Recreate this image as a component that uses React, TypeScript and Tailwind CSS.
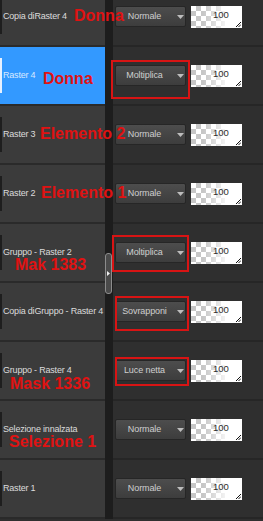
import React from "react";

type Layer = {
  name: string;
  mode: string;
  active?: boolean;
  note?: { text: string; left: number; top: number };
  box?: { left: number; top: number; w: number; h: number };
};

const layers: Layer[] = [
  { name: "Copia diRaster 4", mode: "Normale", note: { text: "Donna", left: 74, top: 20 } },
  {
    name: "Raster 4",
    mode: "Moltiplica",
    active: true,
    note: { text: "Donna", left: 43, top: 24 },
    box: { left: 111, top: 13, w: 79, h: 39 },
  },
  { name: "Raster 3", mode: "Normale", note: { text: "Elemento 2", left: 40, top: 20 } },
  { name: "Raster 2", mode: "Normale", note: { text: "Elemento 1", left: 41, top: 20 } },
  {
    name: "Gruppo - Raster 2",
    mode: "Moltiplica",
    note: { text: "Mak 1383", left: 15, top: 33 },
    box: { left: 112, top: 11, w: 77, h: 37 },
  },
  {
    name: "Copia diGruppo - Raster 4",
    mode: "Sovrapponi",
    box: { left: 115, top: 13, w: 74, h: 35 },
  },
  {
    name: "Gruppo - Raster 4",
    mode: "Luce netta",
    note: { text: "Mask 1336", left: 10, top: 34 },
    box: { left: 115, top: 15, w: 74, h: 29 },
  },
  { name: "Selezione innalzata", mode: "Normale", note: { text: "Selezione 1", left: 9, top: 33 } },
  { name: "Raster 1", mode: "Normale" },
];

const ModeSelect: React.FC<{ value: string }> = ({ value }) => (
  <div className="relative w-[71px] h-[21px] flex items-center rounded-[2px] border border-[#262626] bg-linear-to-b from-[#4d4d4d] to-[#3d3d3d]">
    <span className="w-[57px] text-center text-[9px] leading-none text-[#cfcfcf] tracking-[-0.1px]">
      {value}
    </span>
    <svg width="7" height="4" viewBox="0 0 7 4" className="ml-[4px]">
      <path d="M0 0 L7 0 L3.5 4 Z" fill="#bdbdbd" />
    </svg>
  </div>
);

const Opacity: React.FC = () => (
  <div className="relative w-[51px] h-[22px] bg-white overflow-hidden">
    <div className="absolute left-0 top-0 h-full w-[34px] bg-[repeating-conic-gradient(#c6c6c6_0_25%,#ffffff_0_50%)] bg-[length:10px_10px]" />
    <div className="absolute left-0 top-0 h-full w-[40px] bg-linear-to-r from-transparent from-30% to-white" />
    <span className="absolute left-[22px] top-[4px] text-[9.5px] leading-none text-[#2e2e2e]">
      100
    </span>
    <svg width="5" height="5" viewBox="0 0 5 5" className="absolute right-[1px] bottom-[1px]">
      <path d="M5 0 L0 5 M5 2.5 L2.5 5" stroke="#111" strokeWidth="1" />
    </svg>
  </div>
);

const App: React.FC = () => {
  return (
    <div
      className="relative w-[263px] h-[521px] overflow-hidden bg-[#2f2f2f]"
      style={{ fontFamily: '"Liberation Sans", Arial, sans-serif' }}
    >
      <div className="flex flex-col -mt-[12px]">
        {layers.map((layer) => (
          <div key={layer.name} className="relative flex h-[59px] shrink-0">
            <div
              className={`w-[105px] flex items-center border-b-2 border-[#2a2a2a] ${
                layer.active ? "bg-[#3399ff]" : "bg-[#3b3b3b]"
              }`}
            >
              <div
                className={`w-[2px] h-[35px] ${layer.active ? "bg-[#e6f0ff]" : "bg-[#1e1e1e]"}`}
              />
              <span
                className={`ml-[1px] whitespace-nowrap text-[9px] tracking-[-0.2px] ${
                  layer.active ? "text-[#d8e8ff]" : "text-[#dcdcdc]"
                }`}
              >
                {layer.name}
              </span>
            </div>
            <div className="w-[8px] bg-[#1d1d1d]" />
            <div className="flex-1 flex items-center gap-[5px] pl-[2px] border-b-2 border-[#262626]">
              <ModeSelect value={layer.mode} />
              <Opacity />
            </div>

            {layer.box && (
              <div
                className="absolute border-2 border-[#d81414]"
                style={{
                  left: layer.box.left,
                  top: layer.box.top,
                  width: layer.box.w,
                  height: layer.box.h,
                }}
              />
            )}
            {layer.note && (
              <span
                className="absolute whitespace-nowrap text-[16px] leading-none font-bold text-[#e01212]"
                style={{ left: layer.note.left, top: layer.note.top }}
              >
                {layer.note.text}
              </span>
            )}
          </div>
        ))}
      </div>

      {/* collapse handle on the splitter */}
      <div className="absolute left-[105px] top-[253px] w-[7px] h-[41px] rounded-[3px] border border-[#8c8c8c] bg-[#4a4a4a] flex items-center justify-center">
        <svg width="3" height="5" viewBox="0 0 3 5">
          <path d="M0 0 L3 2.5 L0 5 Z" fill="#f0f0f0" />
        </svg>
      </div>
    </div>
  );
};

export default App;
